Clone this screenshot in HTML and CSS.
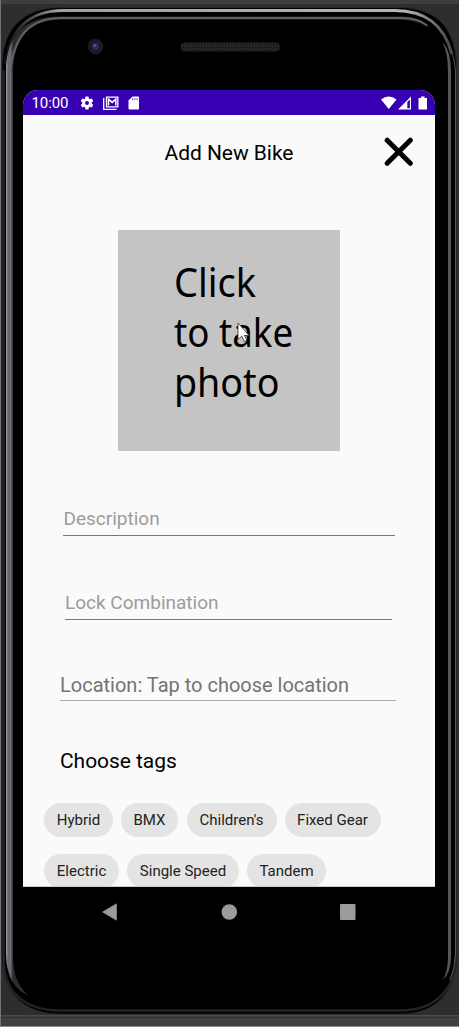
FILE: index.html
```html
<!DOCTYPE html>
<html lang="en">
<head>
<meta charset="utf-8">
<title>Add New Bike</title>
<link rel="stylesheet" href="styles.css">
</head>
<body>
<div class="device">
  <svg class="frame" viewBox="0 0 459 1027" aria-hidden="true">
    <defs>
      <linearGradient id="top" gradientUnits="userSpaceOnUse" x1="8" x2="452" y1="0" y2="0"><stop offset="0" stop-color="#111"/><stop offset=".06" stop-color="#555"/><stop offset=".11" stop-color="#a0a0a1"/><stop offset=".9" stop-color="#b4b4b4"/><stop offset="1" stop-color="#444"/></linearGradient>
      <linearGradient id="side" gradientUnits="userSpaceOnUse" x1="6" x2="13" y1="0" y2="0"><stop offset="0" stop-color="#a0a0a4"/><stop offset=".3" stop-color="#66676c"/><stop offset=".65" stop-color="#6c6d73"/><stop offset="1" stop-color="#2b2c31"/></linearGradient>
      <pattern id="mesh" width="3" height="3" patternUnits="userSpaceOnUse"><rect width="3" height="3" fill="#161616"/><path d="M0 0h1v1h1v1h1v1" fill="none" stroke="#363636" stroke-width=".8"/></pattern>
    </defs>
    <rect width="459" height="1027" fill="#2d2e30"/>
    <rect width="459" height="4" fill="#3d3e40"/>
    <rect y="1015" width="459" height="12" fill="#3e3f41"/>
    <rect y="1015" width="459" height="1" fill="#4b4b4c"/>
    <rect y="1017" width="459" height="1" fill="#303133"/>
    <rect y="1026" width="459" height="1" fill="#8a8a8a"/>
    <path d="M62 7.500H398C438 7.500 456.500 29 456.500 69V953C456.500 992 437 1014 400 1014H60C22 1014 2 991 2 955V67C2 29 22 7.500 62 7.500Z" fill="#000" stroke="#252525"/>
    <path d="M3.500 70V960C3.500 991 24 1010.500 60 1010.500H400C435 1010.500 456 990 456 955" fill="none" stroke="#222324" stroke-width="2.600"/>
    <path d="M5 64C10 29 30 10.500 63 10.500H395C426 10.500 444 25 452 54" fill="none" stroke="url(#top)" stroke-width="3"/>
    <path d="M6 72C6 34 25 16.500 61 16.500H402Q421 17 429 27Q415 19.500 398 19.500H63C29 19.500 13 37 13 74V959Q14 984 29 996Q7 987 6 955Z" fill="url(#side)"/>
    <path d="M11 66C16 32 33 18 62 18H402Q418 18 427 25.500" fill="none" stroke="#606166" stroke-width="2.200"/>
    <path d="M442.500 42Q451 51 451 72V957Q451 973 442.500 980Q448 972 448 957V72Q448 53 442.500 42Z" fill="#55565c"/>
    <path d="M450 50Q455.500 58 455.500 76V955Q455 968 450 980" fill="none" stroke="#58595b"/>
    <circle cx="95.500" cy="46.500" r="7.800" fill="#1d1d1f"/>
    <circle cx="95.500" cy="46.500" r="4.800" fill="#101a32"/>
    <circle cx="95.500" cy="46.500" r="3.500" fill="#22315e"/>
    <circle cx="94.700" cy="45.500" r="1.300" fill="#566694"/>
    <rect x="180.500" y="42.500" width="99.500" height="9" rx="4.500" fill="url(#mesh)"/>
    <rect width="1" height="1027" fill="#737373"/>
  </svg>

  <main class="screen">
    <header class="status">
      <span class="time">10:00</span>
      <svg class="gear" viewBox="0 0 24 24"><path fill="#fff" fill-rule="evenodd" d="M19.140 12.940a7 7 0 0 0 0-1.880l2.030-1.580a.5.500 0 0 0 .12-.61l-1.920-3.320a.5.500 0 0 0-.59-.22l-2.390.96a7 7 0 0 0-1.620-.94l-.36-2.540a.5.500 0 0 0-.48-.41h-3.840a.5.500 0 0 0-.47.410l-.36 2.540a7 7 0 0 0-1.620.94l-2.390-.96a.5.500 0 0 0-.59.220L2.740 8.870a.5.500 0 0 0 .12.610l2.030 1.580a7 7 0 0 0 0 1.880l-2.030 1.580a.5.500 0 0 0-.12.610l1.920 3.320c.12.220.37.290.59.220l2.390-.96c.5.380 1.030.7 1.620.94l.36 2.540c.05.240.24.410.48.410h3.840c.24 0 .44-.17.470-.41l.36-2.540a7 7 0 0 0 1.620-.94l2.390.96c.22.080.47 0 .59-.22l1.920-3.320a.5.500 0 0 0-.12-.61zM12 15a3 3 0 1 1 0-6 3 3 0 0 1 0 6z"/></svg>
      <svg class="mail" viewBox="0 0 16 14"><path d="M.7 2v11.300h12.800M3.500 1.200h11.300v9.600H3.500z" fill="none" stroke="#fff" stroke-width="1.300"/><path d="M5.500 9.500V3.200l3.700 3.200 3.600-3.200v6.300" fill="none" stroke="#fff" stroke-width="1.500"/></svg>
      <svg class="sd" viewBox="0 0 12 14"><path fill="#fff" d="M4.500.5H10q1 0 1 1v11q0 1-1 1H1.500q-1 0-1-1V4.500z"/><path d="M4.700 2.200v2M6.900 2.200v2M9.100 2.200v2" stroke="#3700b3" stroke-opacity=".75"/></svg>
      <svg class="radio" viewBox="0 0 46 14"><path fill="#fff" d="M0 3.400Q7.500-2.400 15.500 3.400L7.800 13zM17 13.500 30 .5v13z"/><path fill="#3700b3" d="M26.300 6 28.900 3.400v8.800h-2.600z"/><path fill="#fff" d="M37.500 2H40V.5h3.500V2H46v11.500h-8.500z"/></svg>
    </header>

    <div class="titlebar">
      <h1>Add New Bike</h1>
      <svg class="close" viewBox="0 0 30 30"><path d="M3.200 3.200 26.300 26.300M26.300 3.200 3.200 26.300" stroke="#000" stroke-width="5" stroke-linecap="round"/></svg>
    </div>

    <div class="photo">
      <div class="line l1">Click</div><div class="line l2">to take</div><div class="line l3">photo</div>
      <svg class="cursor" viewBox="0 0 13 21"><path d="M1 1v16.500l3.700-3.300 2.600 5.300 2.700-1.300-2.600-4.700H12z" fill="#fff" stroke="#333" stroke-width=".8"/></svg>
    </div>

    <div class="field description"><span>Description</span></div>
    <div class="field lock"><span>Lock Combination</span></div>
    <div class="field location"><span>Location: Tap to choose location</span></div>

    <h2><span>Choose tags</span></h2>
    <div class="tags">
      <div class="row"><span class="chip hybrid">Hybrid</span><span class="chip bmx">BMX</span><span class="chip children">Children's</span><span class="chip fixed">Fixed Gear</span></div>
      <div class="row"><span class="chip electric">Electric</span><span class="chip single">Single Speed</span><span class="chip tandem">Tandem</span></div>
    </div>
  </main>

  <nav class="nav">
    <svg viewBox="0 0 246 18"><path d="M.5 9 14.500.8v16.400z" fill="#9b9b9b" stroke="#9b9b9b" stroke-width=".6" stroke-linejoin="round"/><circle cx="127.300" cy="9" r="7.800" fill="#9b9b9b"/><rect x="238" y="1" width="15.500" height="16" rx="1" fill="#9b9b9b"/></svg>
  </nav>
</div>
</body>
</html>
```
FILE: styles.css
```css
* { box-sizing: border-box; }
body { margin: 0; overflow: hidden; background: #2d2e30; font-family: Roboto, sans-serif; }
svg { display: block; flex: none; }
h1, h2 { margin: 0; font-weight: 400; color: #000; white-space: nowrap; }
.device { position: relative; width: 459px; height: 1027px; padding: 90px 0 0 23px; }
.frame { position: absolute; inset: 0; width: 459px; height: 1027px; }
.screen { position: relative; width: 412px; height: 797px; overflow: hidden; background: #fafafa; border-radius: 15px 15px 0 0; border-bottom: 1px solid #ccc; }
.status { display: flex; align-items: center; height: 25px; padding: 0 8px 0 8.500px; background: #3700b3; color: #fff; }
.time { width: 47.500px; font-size: 15px; line-height: 26px; padding-top: 1px; letter-spacing: -.1px; }
.gear { width: 16px; height: 16px; }
.mail { width: 16px; height: 14px; margin-left: 8px; }
.sd { width: 12px; height: 14px; margin-left: 9px; }
.radio { width: 46px; height: 14px; margin-left: auto; }
.titlebar { display: flex; height: 115px; padding: 22px 21px 0 141.500px; justify-content: space-between; }
h1 { font-size: 21px; line-height: 32px; letter-spacing: -.05px; }
.close { width: 30px; height: 30px; }
.photo { position: relative; width: 222px; height: 221px; margin-left: 95px; padding: 27px 0 0 56px; background: #c4c4c4; color: #000; font: 40px/50px "Noto Sans", sans-serif; white-space: nowrap; }
.line { height: 50px; transform-origin: 0 50%; }
.l1 { transform: scaleX(.95); }
.l2 { transform: scaleX(.918); }
.l3 { transform: scaleX(.94); }
.cursor { position: absolute; left: 119px; top: 92px; width: 13px; height: 21px; }
.field { border-bottom: 1px solid #777; color: #9c9c9c; font-size: 19px; line-height: 24px; white-space: nowrap; }
.description { width: 332px; margin: 56px 0 0 40px; height: 29px; padding-left: .5px; }
.lock { width: 327px; margin: 55px 0 0 42px; height: 29px; }
.location { width: 336px; margin: 53px 0 0 37px; height: 28px; color: #747474; border-color: #aaa; font-size: 20px; }
h2 { margin: 45px 0 0 37px; font-size: 21px; line-height: 30px; letter-spacing: -.05px; }
.tags { display: grid; gap: 17px; margin: 27px 0 0 21px; }
.row { display: flex; gap: 8px; height: 34px; }
.chip { display: flex; justify-content: center; align-items: center; height: 34px; border-radius: 17px; background: #e4e4e4; color: #222; font-size: 15px; white-space: nowrap; }
.hybrid { width: 69px; } .bmx { width: 57px; margin-right: .5px; } .children { width: 90px; } .fixed { width: 96px; }
.electric { width: 75px; } .single { width: 112px; } .tandem { width: 79px; }
.nav { position: relative; height: 50px; padding: 16px 0 0 78.500px; }
.nav svg { width: 246px; height: 18px; overflow: visible; }
```
